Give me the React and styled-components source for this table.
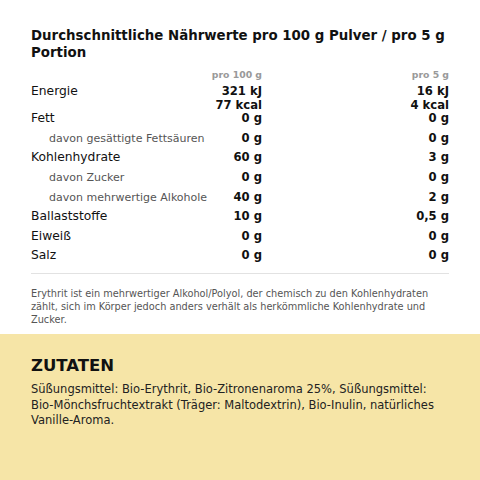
import styled, { createGlobalStyle } from "styled-components";

const GlobalStyle = createGlobalStyle`
  html, body {
    margin: 0;
    padding: 0;
    background: #fff;
  }
  body {
    font-family: "DejaVu Sans", "Liberation Sans", sans-serif;
    color: #111;
  }
`;

const Page = styled.div`
  width: 480px;
  height: 480px;
  display: flex;
  flex-direction: column;
  overflow: hidden;
`;

const Nutrition = styled.section`
  padding: 27px 31px 0;
  background: #fff;
`;

const Title = styled.h2`
  margin: 0 0 7.3px;
  font-size: 13.35px;
  line-height: 17.3px;
  font-weight: bold;
  color: #111;
`;

const Table = styled.div`
  display: flex;
  flex-direction: column;
`;

const Row = styled.div`
  display: grid;
  grid-template-columns: minmax(0, 1fr) 60px 187px;
  align-items: start;
  padding: 3px 0;
  line-height: 13.6px;
`;

const HeadRow = styled(Row)`
  padding: 0 0 1.2px;
  line-height: 12px;
`;

const HeadCell = styled.span`
  text-align: right;
  font-size: 9.3px;
  font-weight: bold;
  color: #999;
`;

const Label = styled.div`
  font-size: ${(p) => (p.$sub ? "11px" : "12.3px")};
  color: ${(p) => (p.$sub ? "#555" : "#111")};
  padding-left: ${(p) => (p.$sub ? "18px" : "0")};
  white-space: nowrap;
`;

const Value = styled.div`
  text-align: right;
  font-size: 11.6px;
  font-weight: bold;
  color: #111;
`;

const Second = styled.span`
  display: block;
  margin-bottom: -6px;
`;

const Divider = styled.hr`
  margin: 6.5px 0 0;
  border: none;
  border-top: 1px solid #e2e2e2;
`;

const Note = styled.p`
  margin: 13px 0 7.5px;
  font-size: 9.75px;
  line-height: 13.4px;
  color: #555;
`;

const Ingredients = styled.section`
  flex: 1;
  background: #f6e5a7;
  padding: 22px 31px 0;
`;

const SectionTitle = styled.h3`
  margin: 0 0 5.6px;
  font-size: 16.5px;
  line-height: 20px;
  font-weight: bold;
  color: #111;
`;

const IngredientText = styled.p`
  margin: 0;
  font-size: 11.5px;
  line-height: 15.7px;
  color: #222;
`;

const rows = [
  { label: "Fett", a: "0 g", b: "0 g" },
  { label: "davon gesättigte Fettsäuren", a: "0 g", b: "0 g", sub: true },
  { label: "Kohlenhydrate", a: "60 g", b: "3 g" },
  { label: "davon Zucker", a: "0 g", b: "0 g", sub: true },
  { label: "davon mehrwertige Alkohole", a: "40 g", b: "2 g", sub: true },
  { label: "Ballaststoffe", a: "10 g", b: "0,5 g" },
  { label: "Eiweiß", a: "0 g", b: "0 g" },
  { label: "Salz", a: "0 g", b: "0 g" },
];

export default function App() {
  return (
    <Page>
      <GlobalStyle />
      <Nutrition>
        <Title>Durchschnittliche Nährwerte pro 100 g Pulver / pro 5 g Portion</Title>
        <Table>
          <HeadRow>
            <span />
            <HeadCell>pro 100 g</HeadCell>
            <HeadCell>pro 5 g</HeadCell>
          </HeadRow>
          <Row>
            <Label>Energie</Label>
            <Value>
              321 kJ
              <Second>77 kcal</Second>
            </Value>
            <Value>
              16 kJ
              <Second>4 kcal</Second>
            </Value>
          </Row>
          {rows.map((r) => (
            <Row key={r.label}>
              <Label $sub={r.sub}>{r.label}</Label>
              <Value>{r.a}</Value>
              <Value>{r.b}</Value>
            </Row>
          ))}
        </Table>
        <Divider />
        <Note>
          Erythrit ist ein mehrwertiger Alkohol/Polyol, der chemisch zu den Kohlenhydraten
          zählt, sich im Körper jedoch anders verhält als herkömmliche Kohlenhydrate und
          Zucker.
        </Note>
      </Nutrition>
      <Ingredients>
        <SectionTitle>ZUTATEN</SectionTitle>
        <IngredientText>
          Süßungsmittel: Bio-Erythrit, Bio-Zitronenaroma 25%, Süßungsmittel:
          Bio-Mönchsfruchtextrakt (Träger: Maltodextrin), Bio-Inulin, natürliches
          Vanille-Aroma.
        </IngredientText>
      </Ingredients>
    </Page>
  );
}
